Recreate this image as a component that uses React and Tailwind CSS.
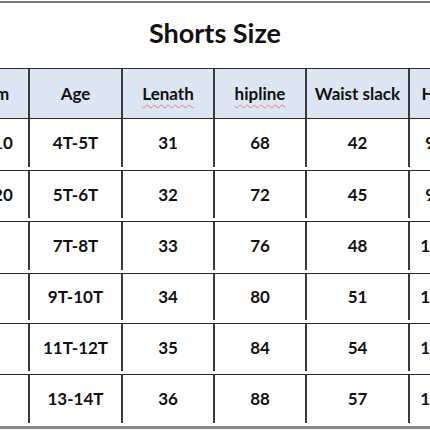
import React from "react";

const rows = [
  { h: "h-[52px]", cm: "110", age: "4T-5T", len: "31", hip: "68", waist: "42", last: "95" },
  { h: "h-[51px]", cm: "120", age: "5T-6T", len: "32", hip: "72", waist: "45", last: "98" },
  { h: "h-[52px]", cm: "", age: "7T-8T", len: "33", hip: "76", waist: "48", last: "110" },
  { h: "h-[50px]", cm: "", age: "9T-10T", len: "34", hip: "80", waist: "51", last: "120" },
  { h: "h-[51px]", cm: "", age: "11T-12T", len: "35", hip: "84", waist: "54", last: "140" },
  { h: "h-[52px]", cm: "", age: "13-14T", len: "36", hip: "88", waist: "57", last: "150" },
];

const grid = "grid grid-cols-[60px_93px_92px_92px_103px_52px]";
const cell = "flex items-center justify-center whitespace-nowrap border-l-2 border-[#3a3a3a] first:border-l-0";
const spell = "underline decoration-wavy decoration-[#e07a8a] decoration-1 underline-offset-[4px]";

export default function App() {
  return (
    <div className="w-[430px] h-[430px] overflow-hidden bg-white text-[#111] font-bold" style={{ fontFamily: "Lato, 'Open Sans', sans-serif" }}>
      <div className="mt-px h-[2px] bg-[#7a7a7a]" />
      <div className="h-[65px] flex items-center justify-center pb-[6px]">
        <h1 className="text-[27px] leading-none">Shorts Size</h1>
      </div>
      <div className="ml-[-32px] w-[492px] text-[17px]">
        <div className={`${grid} h-[50px] bg-[#dce6f2] border-t border-[#2a2a2a]`}>
          <div className={cell}>cm</div>
          <div className={cell}>Age</div>
          <div className={cell}><span className={spell}>Lenath</span></div>
          <div className={cell}><span className={spell}>hipline</span></div>
          <div className={cell}>Waist slack</div>
          <div className={cell}>Hip</div>
        </div>
        {rows.map((r, i) => (
          <div key={i} className={`${grid} ${r.h} border-t border-[#2a2a2a] pb-[3px]`}>
            <div className={cell}>{r.cm}</div>
            <div className={cell}>{r.age}</div>
            <div className={cell}>{r.len}</div>
            <div className={cell}>{r.hip}</div>
            <div className={cell}>{r.waist}</div>
            <div className={cell}>{r.last}</div>
          </div>
        ))}
        <div className="h-[3px] bg-[#8a8a8a]" />
      </div>
    </div>
  );
}
